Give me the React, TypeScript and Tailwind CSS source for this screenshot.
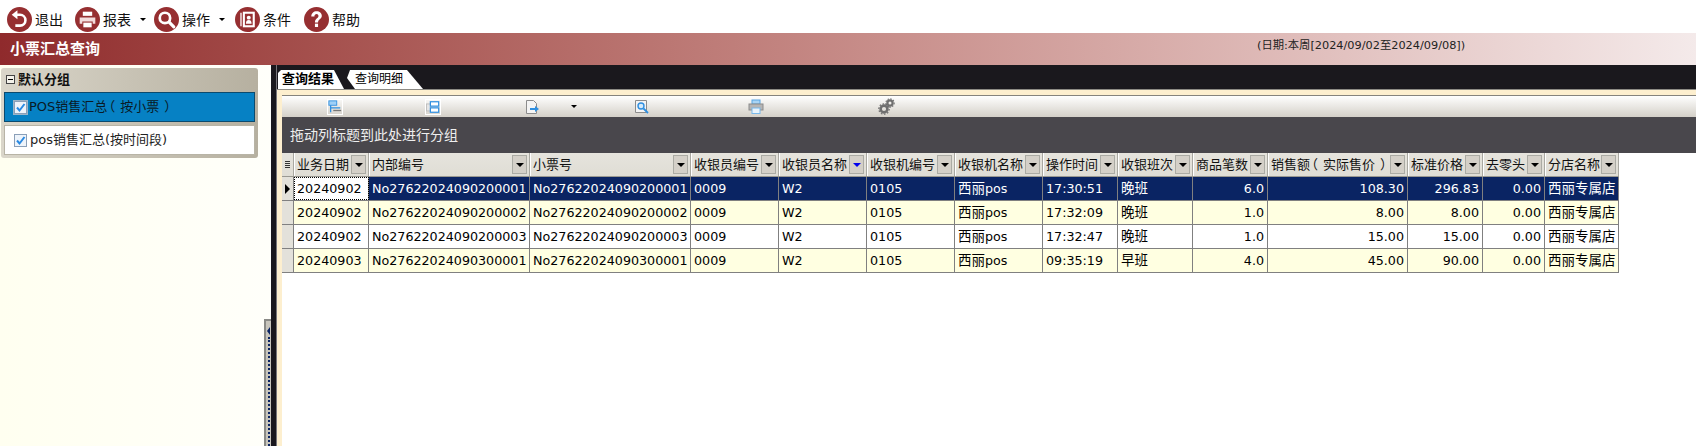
import React from 'react'

const latin = 'font-["DejaVu_Sans","Noto_Sans_CJK_SC",sans-serif]'

const columns = [
  { title: '业务日期', w: 'w-[75px]' },
  { title: '内部编号', w: 'w-[161px]' },
  { title: '小票号', w: 'w-[161px]' },
  { title: '收银员编号', w: 'w-[88px]' },
  { title: '收银员名称', w: 'w-[88px]', sorted: true },
  { title: '收银机编号', w: 'w-[88px]' },
  { title: '收银机名称', w: 'w-[88px]' },
  { title: '操作时间', w: 'w-[75px]' },
  { title: '收银班次', w: 'w-[75px]' },
  { title: '商品笔数', w: 'w-[75px]', right: true },
  { title: '销售额（实际售价）', w: 'w-[140px]', right: true },
  { title: '标准价格', w: 'w-[75px]', right: true },
  { title: '去零头', w: 'w-[62px]', right: true },
  { title: '分店名称', w: 'w-[74px]' },
]

const rows = [
  ['20240902', 'No27622024090200001', 'No27622024090200001', '0009', 'W2', '0105', '西丽pos', '17:30:51', '晚班', '6.0', '108.30', '296.83', '0.00', '西丽专属店'],
  ['20240902', 'No27622024090200002', 'No27622024090200002', '0009', 'W2', '0105', '西丽pos', '17:32:09', '晚班', '1.0', '8.00', '8.00', '0.00', '西丽专属店'],
  ['20240902', 'No27622024090200003', 'No27622024090200003', '0009', 'W2', '0105', '西丽pos', '17:32:47', '晚班', '1.0', '15.00', '15.00', '0.00', '西丽专属店'],
  ['20240903', 'No27622024090300001', 'No27622024090300001', '0009', 'W2', '0105', '西丽pos', '09:35:19', '早班', '4.0', '45.00', '90.00', '0.00', '西丽专属店'],
]

const RoundIcon = ({ children }: { children: React.ReactNode }) => (
  <svg width="25" height="25" viewBox="0 0 24 24" className="shrink-0">
    <circle cx="12" cy="12" r="12" fill="#962f31" />
    {children}
  </svg>
)

const BackIcon = () => (
  <RoundIcon>
    <path d="M9 7.5h3.5a5 5 0 0 1 0 10.4h-4.5" fill="none" stroke="#fff" strokeWidth="2.5" />
    <path d="M4.5 7.5 L10 3.2 L10 11.8 Z" fill="#fff" />
  </RoundIcon>
)

const PrintIcon = () => (
  <RoundIcon>
    <path d="M7.5 4.5h9v4h-9z" fill="#fff" />
    <path d="M4.5 10h15v6h-2.5v-2h-10v2h-2.5z" fill="#f2dcdc" />
    <path d="M8 15h8v4.5h-8z" fill="#fff" />
  </RoundIcon>
)

const SearchIcon = () => (
  <RoundIcon>
    <circle cx="10.5" cy="10.5" r="5" fill="none" stroke="#fff" strokeWidth="2.6" />
    <path d="M14.5 14.5 L19 19" stroke="#fff" strokeWidth="3" strokeLinecap="round" />
  </RoundIcon>
)

const CardIcon = () => (
  <RoundIcon>
    <path d="M5 5.5h1.5v13h-1.5z" fill="#f2dcdc" />
    <path d="M7.5 4.5h11.5v15h-11.5z" fill="#fff" />
    <path d="M9.5 6.5h7.5v11h-7.5z" fill="#962f31" />
    <circle cx="13.2" cy="10.2" r="1.9" fill="#fff" />
    <path d="M10.5 16c0-2.6 1-3.6 2.7-3.6s2.7 1 2.7 3.6z" fill="#fff" />
  </RoundIcon>
)

const HelpIcon = () => (
  <RoundIcon>
    <path d="M7 9c0-3 2.2-5 5.1-5s5 1.8 5 4.4c0 3.4-3.6 3.4-3.6 6.4h-3c0-4 3.4-4 3.4-6.2 0-1-.8-1.8-1.9-1.8s-2 .9-2 2.2z" fill="#fff" />
    <rect x="10.5" y="16" width="3" height="3.2" fill="#fff" />
  </RoundIcon>
)

const Caret = () => (
  <span className="w-0 h-0 border-x-[3px] border-x-transparent border-t-[3px] border-t-black" />
)

const ToolItem = ({ icon, label, caret, className }: { icon: React.ReactNode; label: string; caret?: boolean; className: string }) => (
  <div className={`flex items-center ${className}`}>
    {icon}
    <span className="ml-[3px] text-[14px] text-[#111] pt-[2px]">{label}</span>
    {caret && (
      <span className="ml-[9px] flex">
        <Caret />
      </span>
    )}
  </div>
)

const Check = () => (
  <svg width="13" height="13" viewBox="0 0 13 13" className="shrink-0">
    <rect x="0.5" y="0.5" width="12" height="12" fill="#eef4fb" stroke="#8a9fb8" />
    <path d="M3 6.5 L5.5 9.5 L10.5 3" fill="none" stroke="#2b8ae2" strokeWidth="2" />
  </svg>
)

const GridIconA = () => (
  <svg width="14" height="14" viewBox="0 0 16 16">
    <rect x="1" y="1" width="9" height="5" fill="#9fd0f7" stroke="#2f8fe0" />
    <path d="M3 6v8M3 9h11" stroke="#2f8fe0" strokeWidth="1.5" fill="none" />
    <path d="M6 12h9" stroke="#777" strokeWidth="1.5" />
  </svg>
)

const GridIconB = () => (
  <svg width="14" height="14" viewBox="0 0 16 16">
    <rect x="0.5" y="4.5" width="5" height="8" fill="#e6e6e6" stroke="#bbb" />
    <rect x="5" y="2" width="9.5" height="5" fill="#fff" stroke="#2f8fe0" strokeWidth="1.4" />
    <rect x="5" y="9" width="9.5" height="5" fill="#fff" stroke="#2f8fe0" strokeWidth="1.4" />
  </svg>
)

const ExportIcon = () => (
  <svg width="16" height="16" viewBox="0 0 16 16">
    <path d="M2.5 1.5h7l3 3v10h-10z" fill="#f4f4f4" stroke="#8c8c8c" />
    <path d="M6 10h6" stroke="#2f8fe0" strokeWidth="2" />
    <path d="M11 7l4 3-4 3z" fill="#2f8fe0" />
  </svg>
)

const PreviewIcon = () => (
  <svg width="16" height="16" viewBox="0 0 16 16">
    <path d="M1.5 1.5h11v12h-11z" fill="#f4f4f4" stroke="#8c8c8c" />
    <circle cx="7" cy="7" r="3" fill="#d6ebfb" stroke="#2f8fe0" strokeWidth="1.4" />
    <path d="M9.5 9.5L14 14" stroke="#2f8fe0" strokeWidth="1.8" />
  </svg>
)

const SmallPrintIcon = () => (
  <svg width="16" height="16" viewBox="0 0 16 16">
    <rect x="4" y="1" width="8" height="4" fill="#a8d4f5" stroke="#58a5e4" />
    <rect x="1" y="5" width="14" height="6" fill="#b5b5b5" stroke="#8c8c8c" />
    <rect x="4" y="9" width="8" height="5.5" fill="#e8f3fc" stroke="#78b8ea" />
  </svg>
)

const GearIcon = () => (
  <svg width="17" height="17" viewBox="0 0 17 17">
    <circle cx="6" cy="11" r="3.4" fill="none" stroke="#6f6f6f" strokeWidth="2.6" />
    <circle cx="6" cy="11" r="5.2" fill="none" stroke="#6f6f6f" strokeWidth="1.2" strokeDasharray="1.6 1.6" />
    <circle cx="12" cy="5" r="2.6" fill="none" stroke="#6f6f6f" strokeWidth="2.2" />
    <circle cx="12" cy="5" r="4.2" fill="none" stroke="#6f6f6f" strokeWidth="1.1" strokeDasharray="1.4 1.4" />
  </svg>
)

// noto pushes the full width brackets against the inner text, the old grid font does not
const Spaced = ({ text }: { text: string }) => {
  const m = text.match(/^(.*)（(.*)）$/)
  if (!m) return <>{text}</>
  return (
    <>
      {m[1]}
      <span className="-ml-[5px] pr-[5px]">（</span>
      {m[2]}
      <span className="pl-[5px] -mr-[5px]">）</span>
    </>
  )
}

const HeaderCell = ({ title, w, sorted }: { title: string; w: string; sorted?: boolean }) => (
  <div className={`${w} shrink-0 h-full flex items-center justify-between pl-[3px] pr-[2px] border-r border-r-[#a9a8a1] shadow-[inset_1px_0_0_#fff]`}>
    <span className="text-[13px] text-[#111] whitespace-nowrap">
      <Spaced text={title} />
    </span>
    <span className="w-[15px] h-[19px] shrink-0 bg-[#d4d0c8] border border-[#ababa4] flex items-center justify-center">
      <span className={`w-0 h-0 border-x-[4px] border-x-transparent border-t-[4px] ${sorted ? 'border-t-[#0000ee]' : 'border-t-black'}`} />
    </span>
  </div>
)

const CellText = ({ text }: { text: string }) => {
  if (text === '西丽pos') {
    return (
      <>
        <span className="text-[13.5px]">西丽</span>pos
      </>
    )
  }
  if (/[\u4e00-\u9fff]/.test(text)) return <span className="text-[13.5px]">{text}</span>
  return <>{text}</>
}

const DataRow = ({ cells, index }: { cells: string[]; index: number }) => {
  const selected = index === 0
  const bg = selected ? 'bg-[#0a2463] text-white' : index % 2 === 1 ? 'bg-[#ffffe1] text-black' : 'bg-white text-black'
  return (
    <div className="flex h-[24px] border-b border-b-[#808080]">
      <div className="w-[12px] shrink-0 bg-[#e3e1da] border-r border-r-[#808080] flex items-center justify-center">
        {selected && <span className="w-0 h-0 border-y-[5px] border-y-transparent border-l-[5px] border-l-black" />}
      </div>
      {cells.map((cell, i) => {
        const col = columns[i]
        const first = selected && i === 0
        return (
          <div
            key={i}
            className={`${col.w} shrink-0 flex items-center border-r border-r-[#808080] pl-[3px] pr-[3px] whitespace-nowrap overflow-hidden text-[12.7px] ${
              col.right ? 'justify-end' : ''
            } ${first ? 'bg-white text-black outline outline-1 -outline-offset-1 outline-dotted outline-black' : bg}`}
          >
            <CellText text={cell} />
          </div>
        )
      })}
    </div>
  )
}

export default function App() {
  return (
    <div className={`w-[1696px] h-[446px] flex flex-col overflow-hidden bg-white ${latin}`}>
      {/* top toolbar */}
      <div className="h-[33px] flex items-center pl-[7px] pt-[5px] shrink-0">
        <ToolItem icon={<BackIcon />} label="退出" className="w-[68px]" />
        <ToolItem icon={<PrintIcon />} label="报表" caret className="w-[79px]" />
        <ToolItem icon={<SearchIcon />} label="操作" caret className="w-[81px]" />
        <ToolItem icon={<CardIcon />} label="条件" className="w-[69px]" />
        <ToolItem icon={<HelpIcon />} label="帮助" className="w-[80px]" />
      </div>

      {/* title bar */}
      <div className="h-[32px] shrink-0 flex bg-gradient-to-r from-[#8f2a2c] to-[#f4eaea]">
        <div className="w-[1257px] pl-[10px] pt-[5px] text-[15px] font-bold text-white">小票汇总查询</div>
        <div className="pt-[5px] text-[11.3px] text-[#222]">(日期:本周[2024/09/02至2024/09/08])</div>
      </div>

      <div className="flex flex-1 min-h-0">
        {/* left panel */}
        <div className="w-[271px] shrink-0 flex bg-gradient-to-r from-[#fffff0] to-[#fffffa]">
          <div className="w-[264px] pl-[1px] pt-[3px]">
            <div className="w-[257px] h-[90px] rounded-[3px] bg-[#c9c5b8] p-[3px] pt-0 bg-gradient-to-r from-[#dad6ca] to-[#b6b0a0]">
              <div className="h-[24px] flex items-center">
                <span className="ml-[2px] w-[9px] h-[9px] border border-[#444] bg-[#f4f2ea] flex items-center justify-center mb-[2px]">
                  <span className="w-[5px] h-px bg-black" />
                </span>
                <span className="ml-[3px] text-[13px] font-bold text-[#111]">默认分组</span>
              </div>
              <div className="h-[30px] bg-[#0681c4] border border-[#0b4a6e] flex items-center pl-[8px]">
                <span className="flex border border-[#9cb4c8]">
                  <Check />
                </span>
                <span className="ml-[1px] text-[13px] text-[#0a1a26] whitespace-nowrap">
                  <Spaced text="POS销售汇总（按小票）" />
                </span>
              </div>
              <div className="mt-[3px] h-[30px] bg-white border border-[#b8b4a6] flex items-center pl-[9px]">
                <Check />
                <span className="ml-[3px] text-[13px] text-[#222] whitespace-nowrap">pos销售汇总(按时间段)</span>
              </div>
            </div>
          </div>
          {/* splitter */}
          <div className="w-[7px] flex flex-col justify-end">
            <div className="h-[127px] bg-[#c8c5bc] border-t-2 border-l-2 border-[#8a8a86] flex flex-col items-center pt-[6px]">
              <span className="w-0 h-0 border-y-[4px] border-y-transparent border-r-[3px] border-r-[#0a2463]" />
              <span className="mt-[2px] flex-1 border-l-2 border-dotted border-l-[#0a2463]" />
            </div>
          </div>
        </div>

        {/* right side */}
        <div className="flex-1 min-w-0 flex flex-col bg-[#1a181d] pl-[5px]">
          <div className="h-[24px] shrink-0 flex items-end pl-[1px] border-l border-l-[#77757a]">
            <div className="w-[66px] h-[19px] bg-[#fff] [clip-path:polygon(3px_0,56px_0,66px_100%,0_100%,0_3px)] pl-[4px] text-[13px] font-bold text-black leading-[18px]">
              查询结果
            </div>
            <div className="w-[76px] h-[19px] ml-[3px] bg-[#fff] [clip-path:polygon(3px_0,60px_0,76px_100%,8px_100%,0_8px)] pl-[8px] text-[12px] text-black leading-[18px]">
              查询明细
            </div>
          </div>
          <div className="flex-1 min-h-0 bg-[#fdefcf] pl-[5px] pt-[5px] border-l border-l-[#77757a] border-t border-t-[#8c8a84]">
            <div className="h-full bg-white flex flex-col">
              {/* grid toolbar */}
              <div className="h-[22px] shrink-0 flex items-center border-t border-t-[#85837d] bg-gradient-to-b from-white to-[#d4d0c8]">
                <span className="ml-[45px] flex border border-white"><GridIconA /></span>
                <span className="ml-[82px] flex border border-white"><GridIconB /></span>
                <span className="ml-[83px] flex"><ExportIcon /></span>
                <span className="ml-[31px] flex"><Caret /></span>
                <span className="ml-[57px] flex"><PreviewIcon /></span>
                <span className="ml-[98px] flex"><SmallPrintIcon /></span>
                <span className="ml-[114px] flex"><GearIcon /></span>
              </div>
              {/* group by bar */}
              <div className="h-[36px] shrink-0 bg-[#49474c] flex items-center pl-[8px] text-[14px] text-[#eeeeee]">
                拖动列标题到此处进行分组
              </div>
              {/* table */}
              <div className="w-[1337px]">
                <div className="flex h-[24px] bg-gradient-to-b from-[#e6e4dd] to-[#dfddd5] border-b border-b-[#9a9992] items-center">
                  <div className="w-[12px] shrink-0 h-full border-r border-r-[#a9a8a1] flex flex-col items-center justify-center gap-px">
                    <span className="w-[5px] h-px bg-[#333]" />
                    <span className="w-[5px] h-px bg-[#333]" />
                    <span className="w-[5px] h-px bg-[#333]" />
                    <span className="w-[5px] h-px bg-[#333]" />
                  </div>
                  {columns.map((c) => (
                    <HeaderCell key={c.title} title={c.title} w={c.w} sorted={c.sorted} />
                  ))}
                </div>
                {rows.map((r, i) => (
                  <DataRow key={i} cells={r} index={i} />
                ))}
              </div>
            </div>
          </div>
        </div>
      </div>
    </div>
  )
}
